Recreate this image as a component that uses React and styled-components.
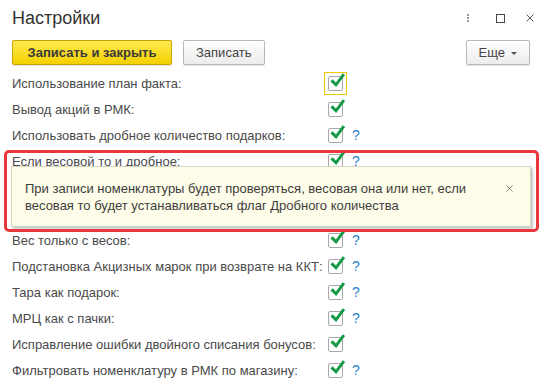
import styled, { createGlobalStyle } from 'styled-components'

const GlobalStyle = createGlobalStyle`
  html, body {
    margin: 0;
    padding: 0;
    background: #fff;
  }
  body {
    font-family: "Liberation Sans", Arial, sans-serif;
    color: #444;
  }
  * { box-sizing: border-box; }
`

const Window = styled.div`
  position: relative;
  width: 544px;
  height: 378px;
  overflow: hidden;
  background: #fff;
`

const TitleBar = styled.div`
  display: flex;
  align-items: center;
  height: 36px;
  padding: 0 10px 0 12px;
`

const Title = styled.div`
  flex: 1;
  font-size: 18px;
  color: #333;
`

const Controls = styled.div`
  display: flex;
  align-items: center;
  gap: 21px;
`

const Dots = styled.div`
  display: flex;
  flex-direction: column;
  gap: 1px;
  margin-right: 6px;
  span {
    width: 2px;
    height: 2px;
    background: #999;
  }
`

const MaxBox = styled.div`
  width: 9px;
  height: 9px;
  border: 1px solid #444;
`

const Toolbar = styled.div`
  display: flex;
  align-items: center;
  gap: 11px;
  padding: 4px 14px 0 12px;
`

const Button = styled.button`
  height: 25px;
  padding: 0 12px;
  min-width: ${p => p.$min || 0}px;
  font-family: "Liberation Sans", Arial, sans-serif;
  font-size: 13px;
  font-weight: ${p => (p.$primary ? 'bold' : 'normal')};
  color: ${p => (p.$primary ? '#3a3a3a' : '#444')};
  border: 1px solid ${p => (p.$primary ? '#c2a600' : '#b8b8b8')};
  border-radius: 2px;
  background: ${p =>
    p.$primary
      ? 'linear-gradient(#ffe94f, #f3d000)'
      : 'linear-gradient(#ffffff, #ececec)'};
  box-shadow: 0 1px 1px rgba(0, 0, 0, 0.12);
  display: flex;
  align-items: center;
  justify-content: center;
  gap: 6px;
`

const Spacer = styled.div`
  flex: 1;
`

const Caret = styled.span`
  width: 0;
  height: 0;
  border-left: 3px solid transparent;
  border-right: 3px solid transparent;
  border-top: 3px solid #555;
  margin-top: 1px;
`

const Form = styled.div`
  display: flex;
  flex-direction: column;
  padding: 5px 0 0 12px;
`

const Row = styled.div`
  display: grid;
  grid-template-columns: 307px 15px auto;
  column-gap: 9px;
  align-items: center;
  height: 26px;
`

const Label = styled.div`
  font-size: 13px;
  color: #4a4a4a;
  white-space: nowrap;
`

const Box = styled.div`
  position: relative;
  width: 15px;
  height: 15px;
  border: 1px solid #a8a8a8;
  border-radius: 2px;
  background: #fff;
  &::before {
    content: '';
    display: ${p => (p.$focused ? 'block' : 'none')};
    position: absolute;
    inset: -5px;
    border: 1px solid #f2c600;
  }
  svg {
    position: absolute;
    left: 1px;
    top: -4px;
  }
`

const Help = styled.span`
  font-size: 14px;
  color: #2b80d0;
`

const Tooltip = styled.div`
  position: relative;
  z-index: 1;
  display: flex;
  align-items: flex-start;
  width: 520px;
  margin: -8px 0 0 -1px;
  padding: 13px 17px 12px 13px;
  background: #fefde9;
  border: 1px solid #d6d5c2;
  box-shadow: 2px 2px 2px rgba(0, 0, 0, 0.22);
`

const TooltipText = styled.div`
  flex: 1;
  font-size: 13px;
  line-height: 17px;
  color: #3d3d3d;
  padding-right: 14px;
`

const Close = styled.div`
  margin-top: 5px;
  svg { display: block; }
`

const Highlight = styled.div`
  position: absolute;
  left: 4px;
  top: 150px;
  width: 535px;
  height: 82px;
  border: 3px solid #e8383c;
  border-radius: 5px;
  z-index: 2;
  pointer-events: none;
`

const Check = () => (
  <svg width="16" height="16" viewBox="0 0 16 16">
    <path d="M2.6 8.4 L6 11.8 L13 2.4" fill="none" stroke="#159a47" strokeWidth="3" strokeLinecap="square" />
  </svg>
)

const Cross = ({ size = 8, color = '#555', width = 1 }) => (
  <svg width={size} height={size} viewBox="0 0 8 8">
    <path d="M0.5 0.5 L7.5 7.5 M7.5 0.5 L0.5 7.5" stroke={color} strokeWidth={width} />
  </svg>
)

const rowsTop = [
  { label: 'Использование план факта:', focused: true },
  { label: 'Вывод акций в РМК:' },
  { label: 'Использовать дробное количество подарков:', help: true },
  { label: 'Если весовой то и дробное:', help: true },
]

const rowsBottom = [
  { label: 'Вес только с весов:', help: true },
  { label: 'Подстановка Акцизных марок при возврате на ККТ:', help: true },
  { label: 'Тара как подарок:', help: true },
  { label: 'МРЦ как с пачки:', help: true },
  { label: 'Исправление ошибки двойного списания бонусов:' },
  { label: 'Фильтровать номенклатуру в РМК по магазину:', help: true },
]

const SettingRow = ({ item }) => (
  <Row>
    <Label>{item.label}</Label>
    <Box $focused={item.focused}>
      <Check />
    </Box>
    {item.help ? <Help>?</Help> : <span />}
  </Row>
)

export default function App() {
  return (
    <Window>
      <GlobalStyle />
      <TitleBar>
        <Title>Настройки</Title>
        <Controls>
          <Dots><span /><span /><span /></Dots>
          <MaxBox />
          <Cross size={8} color="#555" />
        </Controls>
      </TitleBar>
      <Toolbar>
        <Button $primary $min={160}>Записать и закрыть</Button>
        <Button $min={80}>Записать</Button>
        <Spacer />
        <Button $min={60}>Еще <Caret /></Button>
      </Toolbar>
      <Form>
        {rowsTop.map(r => <SettingRow key={r.label} item={r} />)}
        <Tooltip>
          <TooltipText>
            При записи номенклатуры будет проверяться, весовая она или нет, если весовая то будет устанавливаться флаг Дробного количества
          </TooltipText>
          <Close><Cross size={7} color="#777" /></Close>
        </Tooltip>
        {rowsBottom.map(r => <SettingRow key={r.label} item={r} />)}
      </Form>
      <Highlight />
    </Window>
  )
}
